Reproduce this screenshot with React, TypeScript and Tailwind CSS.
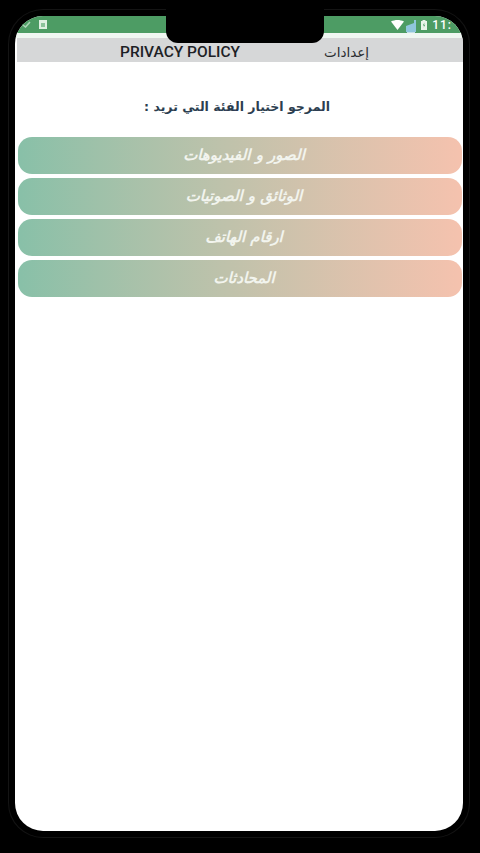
const categories = ['الصور و الفيديوهات', 'الوثائق و الصوتيات', 'ارقام الهاتف', 'المحادثات']

export default function App() {
  return (
    <div className="relative h-[853px] w-[480px] overflow-hidden bg-black pt-4 pb-[22px] pl-[15px] pr-[17px] font-['Roboto',sans-serif]">
      <div className="h-full rounded-[28px] shadow-[0_0_0_6px_#000,0_0_0_7px_#141414]">
        <div className="flex h-full flex-col overflow-hidden rounded-[28px] bg-white">
          {/* status bar */}
          <div className="flex h-[17px] shrink-0 items-center justify-between bg-[#4d9c64] pl-[7px] text-white">
            <div className="flex items-center gap-[8px]">
              <svg width="9" height="7" viewBox="0 0 9 7">
                <path d="M1 4l2.5 2L8 1" fill="none" stroke="#a9d3b4" strokeWidth="1.6" />
              </svg>
              <div className="flex h-[9px] w-[8px] items-center justify-center bg-[#dff0e2]">
                <div className="h-[4px] w-[4px] bg-[#8cc39b]" />
              </div>
            </div>
            <div className="flex items-center gap-[6px] pr-[11px]">
              <svg width="13" height="10" viewBox="0 0 13 10" className="mr-[-5px]">
                <path d="M0 1.5C4 -0.5 9 -0.5 13 1.5L6.5 10Z" fill="#fff" />
              </svg>
              <svg width="12" height="18" viewBox="0 0 12 18" className="mt-[6px] mr-[-2px]">
                <path d="M1 7l8-3V1h2v12H1Z" fill="#8fc6dc" />
                <path d="M2 13h8v5H2Z" fill="#c4e0e8" />
              </svg>
              <svg width="6" height="10" viewBox="0 0 6 10">
                <path d="M1.5 0h3v1H6v9H0V1h1.5Z" fill="#eaf5ec" />
                <path d="M3.5 2.5L1.8 5.5h1.4l-.7 2.2 1.8-3H3Z" fill="#4d9c64" />
              </svg>
              <span className="ml-[-1px] text-[12px] leading-none font-medium tracking-[1px] whitespace-nowrap">11:</span>
            </div>
          </div>
          <div className="h-[5px] shrink-0 bg-[#f0f7f2]" />

          {/* top bar */}
          <div className="ml-[2px] flex h-[24px] shrink-0 items-center bg-[#d6d7d8] pt-[5px]">
            <span className="ml-[103px] text-[15.5px] leading-none font-medium text-[#1d2125]">PRIVACY POLICY</span>
            <span dir="rtl" className="ml-[84px] font-['DejaVu_Sans',sans-serif] text-[13.5px] leading-none text-[#2a2d30]">إعدادات</span>
          </div>

          <p dir="rtl" className="mt-[35px] mr-[133px] font-['DejaVu_Sans',sans-serif] text-[12.5px] leading-[20px] font-bold text-[#2c3e50]">
            المرجو اختيار الفئة التي تريد :
          </p>

          <div className="mt-[20px] flex flex-col gap-[4px] pr-[1px] pl-[3px]">
            {categories.map(label => (
              <div
                key={label}
                dir="rtl"
                className="flex h-[37px] items-center justify-center rounded-[14px] bg-gradient-to-r from-[#88c0a8] to-[#f5c2ae] pl-[8px] font-['DejaVu_Sans',sans-serif] text-[15px] font-bold text-[#f2f4ee] italic"
              >
                {label}
              </div>
            ))}
          </div>
        </div>
      </div>

      {/* camera notch */}
      <div className="absolute top-0 left-[166px] h-[43px] w-[158px] rounded-b-[12px] bg-black" />
    </div>
  )
}
